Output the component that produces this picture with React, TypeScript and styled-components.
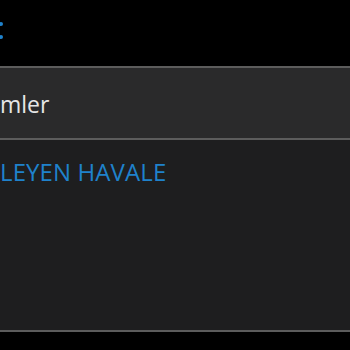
import styled, { createGlobalStyle } from "styled-components";

const GlobalStyle = createGlobalStyle`
  html, body {
    margin: 0;
    padding: 0;
    background: #000;
    font-family: "Open Sans", "Noto Sans", sans-serif;
    overflow: hidden;
  }
`;

const Screen = styled.div`
  width: 350px;
  height: 350px;
  display: flex;
  flex-direction: column;
  background: #000;
  overflow: hidden;
`;

const Header = styled.header`
  height: 66px;
  padding-top: 21px;
  box-sizing: border-box;
  background: #000;
`;

const Divider = styled.div`
  height: 2px;
  background: #5c5c5c;
  flex-shrink: 0;
`;

const MenuRow = styled.div`
  height: 70px;
  display: flex;
  align-items: center;
  padding-top: 2px;
  box-sizing: border-box;
  background: #2a2a2b;
  color: #e6e6e6;
  font-size: 23px;
  white-space: nowrap;
`;

const Panel = styled.section`
  height: 190px;
  background: #1e1e1f;
  padding-top: 15px;
  box-sizing: border-box;
`;

const SectionTitle = styled.h2`
  margin: 0;
  font-weight: 400;
  font-size: 24px;
  letter-spacing: 0.1px;
  color: #1f82cc;
  white-space: nowrap;
`;

function App() {
  return (
    <>
      <GlobalStyle />
      <Screen>
        <Header>
          <svg width="6" height="20" viewBox="0 0 6 20" display="block">
            <circle cx="1" cy="3" r="2" fill="#1f82cc" />
            <circle cx="1" cy="16" r="2" fill="#1f82cc" />
          </svg>
        </Header>
        <Divider />
        <MenuRow>mler</MenuRow>
        <Divider />
        <Panel>
          <SectionTitle>LEYEN HAVALE</SectionTitle>
        </Panel>
        <Divider />
      </Screen>
    </>
  );
}

export default App;
